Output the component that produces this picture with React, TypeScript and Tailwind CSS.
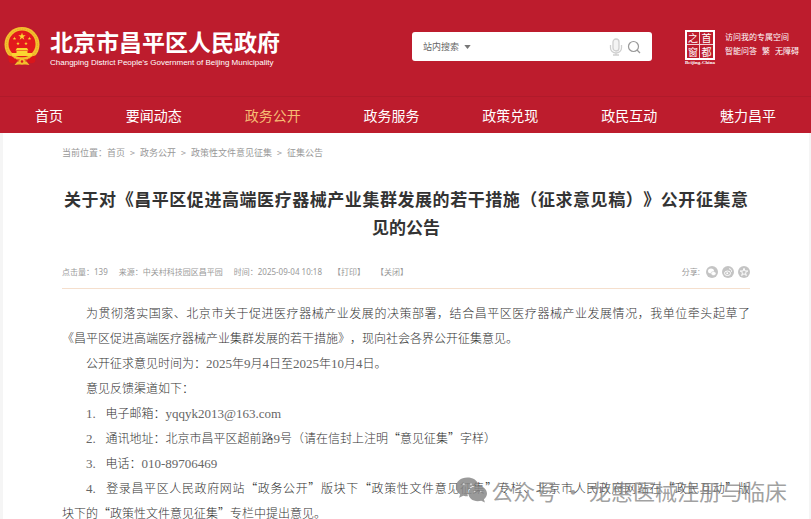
import React from 'react'

type NavItem = {
	label: string
	active?: boolean
}

const navItems: NavItem[] = [
	{ label: '首页' },
	{ label: '要闻动态' },
	{ label: '政务公开', active: true },
	{ label: '政务服务' },
	{ label: '政策兑现' },
	{ label: '政民互动' },
	{ label: '魅力昌平' },
]

const crumbs = ['首页', '政务公开', '政策性文件意见征集', '征集公告']

const star = '0,-10 2.3,-3.1 9.5,-3.1 3.6,1.2 5.9,8.1 0,3.8 -5.9,8.1 -3.6,1.2 -9.5,-3.1 -2.3,-3.1'

const Emblem = () => (
	<svg viewBox="0 0 72 78" className="h-[39px] w-9 shrink-0" aria-hidden="true">
		<circle cx="36" cy="35" r="35" fill="#f3c02d" />
		<circle cx="36" cy="35" r="31" fill="none" stroke="#e0a025" strokeWidth="1.5" strokeDasharray="3 2" />
		<circle cx="36" cy="34" r="27" fill="#e3191c" />
		<g fill="#fbd531">
			<polygon points={star} transform="translate(36 19) scale(.78)" />
			<polygon points={star} transform="translate(21 23) scale(.38)" />
			<polygon points={star} transform="translate(51 23) scale(.38)" />
			<polygon points={star} transform="translate(28 33) scale(.38)" />
			<polygon points={star} transform="translate(44 33) scale(.38)" />
			<path d="M26 42h20l3 5H23zM25 48h22v4h9v6H16v-6h9z" />
		</g>
		<path d="M8 57q8 0 13 6h30q5-6 13-6l-2 13q-8 5-14 0l-4-3H28l-4 3q-6 5-14 0z" fill="#d9161b" />
		<path d="M22 61h28l-3 4H25z" fill="#f3c02d" />
		<path d="M21 76l5-6h20l5 6-8-1H29z" fill="#f3c02d" />
		<circle cx="36" cy="69" r="6" fill="#f3c02d" />
		<circle cx="36" cy="69" r="2.5" fill="#d9161b" />
	</svg>
)

const Seal = () => (
	<a href="#" className="flex w-8 shrink-0 flex-col items-center text-white">
		<span className="grid size-[30px] grid-cols-2 grid-rows-2 border-2 border-white text-[10px] leading-none">
			<span className="flex items-center justify-center border-r border-b border-white/80">之</span>
			<span className="flex items-center justify-center border-b border-white/80">首</span>
			<span className="flex items-center justify-center border-r border-white/80">窗</span>
			<span className="flex items-center justify-center">都</span>
		</span>
		<span className="font-['Liberation_Serif',serif] text-[5px] leading-[6px] font-bold whitespace-nowrap">
			Beijing-China
		</span>
	</a>
)

const SearchBox = () => (
	<form className="flex h-[29px] w-60 items-center rounded-[3px] bg-white px-[11px]">
		<button type="button" className="flex items-center gap-1 text-[9px] text-[#666]">
			站内搜索
			<svg viewBox="0 0 8 5" className="ml-px h-1 w-[7px]" fill="#777">
				<path d="M0 0h8L4 5z" />
			</svg>
		</button>
		<input aria-label="搜索内容" className="min-w-0 flex-1 text-[9px] outline-none" />
		<button type="button" aria-label="语音搜索">
			<svg viewBox="0 0 14 18" className="h-[18px] w-3.5" fill="none" stroke="#cfcfcf" strokeWidth="1.3">
				<rect x="4" y="1" width="6" height="12" rx="3" fill="#f4f4f4" />
				<path d="M1.500 7v3a5.500 5 0 0 0 11 0V7M7 15v2M4 17h6" />
			</svg>
		</button>
		<button type="submit" aria-label="搜索" className="ml-1">
			<svg viewBox="0 0 14 14" className="size-3.5" fill="none" stroke="#999" strokeWidth="1.2">
				<circle cx="6.500" cy="6.500" r="5" />
				<path d="M10 10l3 3" />
			</svg>
		</button>
	</form>
)

const Header = () => (
	<header className="bg-[#bd1c2d] text-white">
		<div className="flex h-[97px] items-start border-b border-[#b01a2a] pr-3 pl-1">
			<a href="#" className="flex items-start pt-[27px]">
				<Emblem />
				<span className="ml-[10px] flex flex-col whitespace-nowrap">
					<span className="text-[23px] leading-7 font-bold">北京市昌平区人民政府</span>
					<span className="font-['Liberation_Sans',sans-serif] text-[8px] leading-4">
						Changping District People's Government of Beijing Municipality
					</span>
				</span>
			</a>
			<div className="ml-auto flex pt-[30px]">
				<div className="pt-[2px]">
					<SearchBox />
				</div>
				<div className="ml-8">
					<Seal />
				</div>
				<div className="ml-[9px] text-[8px] leading-[14px] whitespace-nowrap">
					<a href="#" className="block">
						访问我的专属空间
					</a>
					<div className="flex gap-[5px]">
						<a href="#">智能问答</a>
						<a href="#">繁</a>
						<a href="#">无障碍</a>
					</div>
				</div>
			</div>
		</div>
		<nav className="flex h-9 items-center justify-between px-[35px] text-sm">
			{navItems.map((item) => (
				<a key={item.label} href="#" className={item.active ? 'text-[#f6bd74]' : 'text-white'}>
					{item.label}
				</a>
			))}
		</nav>
	</header>
)

const ShareIcons = () => (
	<div className="flex items-center gap-1">
		<span className="mr-[2px]">分享:</span>
		<a href="#" aria-label="微信">
			<svg viewBox="0 0 24 24" className="size-3">
				<circle cx="12" cy="12" r="12" fill="#c4c4c4" />
				<ellipse cx="10" cy="10" rx="6" ry="5" fill="#fff" />
				<ellipse cx="15" cy="15" rx="5" ry="4" fill="#fff" stroke="#c4c4c4" />
			</svg>
		</a>
		<a href="#" aria-label="微博">
			<svg viewBox="0 0 24 24" className="size-3" fill="none">
				<circle cx="12" cy="12" r="12" fill="#c4c4c4" />
				<ellipse cx="11" cy="14.500" rx="6" ry="4.500" stroke="#fff" strokeWidth="2" />
				<circle cx="10.500" cy="14.500" r="2" fill="#fff" />
				<path d="M14 5.500a5 5 0 0 1 5 6" stroke="#fff" strokeWidth="2" />
			</svg>
		</a>
		<a href="#" aria-label="QQ空间">
			<svg viewBox="0 0 24 24" className="size-3" fill="none">
				<circle cx="12" cy="12" r="12" fill="#c4c4c4" />
				<polygon points={star} transform="translate(12 12.500) scale(.8)" stroke="#fff" strokeWidth="2.500" />
			</svg>
		</a>
	</div>
)

const Latin = ({ children }: { children: React.ReactNode }) => (
	<span className="font-['Liberation_Serif',serif] text-[13px] leading-none text-[#666]">{children}</span>
)

const Article = () => (
	<main className="mr-[2px] ml-[3px] bg-white px-[59px] pb-6 text-[#999]">
		<div className="flex pt-3 text-[9px] leading-4">
			<span>当前位置：</span>
			<div className="flex gap-[5px]">
				{crumbs.map((crumb, i) => (
					<React.Fragment key={crumb}>
						{i > 0 && <span>&gt;</span>}
						<a href="#">{crumb}</a>
					</React.Fragment>
				))}
			</div>
		</div>

		<h1 className="mt-6 px-[2px] text-justify text-[17px] leading-7 font-bold text-[#333] [text-align-last:center]">
			关于对《昌平区促进高端医疗器械产业集群发展的若干措施（征求意见稿）》公开征集意
			<span className="whitespace-nowrap">见的公告</span>
		</h1>

		<div className="mt-[22px] flex h-[26px] items-center justify-between border-b border-[#f5dfcd] pb-2 font-['Noto_Sans','Noto_Sans_CJK_SC',sans-serif] text-[8px]">
			<div className="flex gap-[11px]">
				<span>点击量：139</span>
				<span>来源：中关村科技园区昌平园</span>
				<span>时间：2025-09-04 10:18</span>
				<button type="button">【打印】</button>
				<button type="button">【关闭】</button>
			</div>
			<ShareIcons />
		</div>

		<div className="mt-[11px] text-justify indent-6 text-[12px] leading-[25px] font-light text-[#333]">
			<p>
				为贯彻落实国家、北京市关于促进医疗器械产业发展的决策部署，结合昌平区医疗器械产业发展情况，我单位牵头起草了
				<span className="whitespace-nowrap">《昌平区促进高端医疗器械产业集群发展的若干措施》</span>
				，现向社会各界公开征集意见。
			</p>
			<p>
				公开征求意见时间为：<Latin>2025</Latin>年<Latin>9</Latin>月<Latin>4</Latin>日至<Latin>2025</Latin>年
				<Latin>10</Latin>月<Latin>4</Latin>日。
			</p>
			<p>意见反馈渠道如下：</p>
			<p>
				<Latin>1.&ensp; </Latin>电子邮箱：<Latin>yqqyk2013@163.com</Latin>
			</p>
			<p>
				<Latin>2.&ensp; </Latin>通讯地址：北京市昌平区超前路<Latin>9</Latin>号（请在信封上注明“意见征集”字样）
			</p>
			<p>
				<Latin>3.&ensp; </Latin>电话：<Latin>010-89706469</Latin>
			</p>
			<p>
				<Latin>4.&ensp; </Latin>
				登录昌平区人民政府网站“政务公开”版块下“政策性文件意见征集”专栏、北京市人民政府网站在“政民互动”版
				<span className="whitespace-nowrap">块下的“政策性文件意见征集”专栏</span>中提出意见。
			</p>
		</div>
	</main>
)

const Watermark = () => (
	<div className="pointer-events-none absolute top-[474px] right-6 flex items-center text-[22px] leading-8 whitespace-nowrap text-[#777]/70">
		<svg viewBox="0 0 60 50" className="mr-1 h-[26px] w-[31px]" fill="#888" fillOpacity=".85">
			<path d="M22 1C9 1 0 9 0 19c0 6 3 11 8 14l-2 7 8-4c3 1 6 1 9 1-4-13 8-23 21-22C41 6 32 1 22 1z" />
			<path d="M42 17c-11 0-18 7-18 15s8 15 18 15l7-1 7 3-2-6c4-3 6-7 6-11 0-8-8-15-18-15z" />
			<g fill="#ddd">
				<circle cx="15" cy="14" r="2" />
				<circle cx="29" cy="14" r="2" />
				<circle cx="36" cy="28" r="1.500" />
				<circle cx="48" cy="28" r="1.500" />
			</g>
		</svg>
		<span>公众号 · 龙惠医械注册与临床</span>
	</div>
)

const App = () => {
	return (
		<div className="relative h-screen overflow-hidden bg-[#f5f5f5] font-['Noto_Sans_CJK_SC',sans-serif] [text-spacing-trim:space-all]">
			<Header />
			<Article />
			<Watermark />
		</div>
	)
}

export default App
